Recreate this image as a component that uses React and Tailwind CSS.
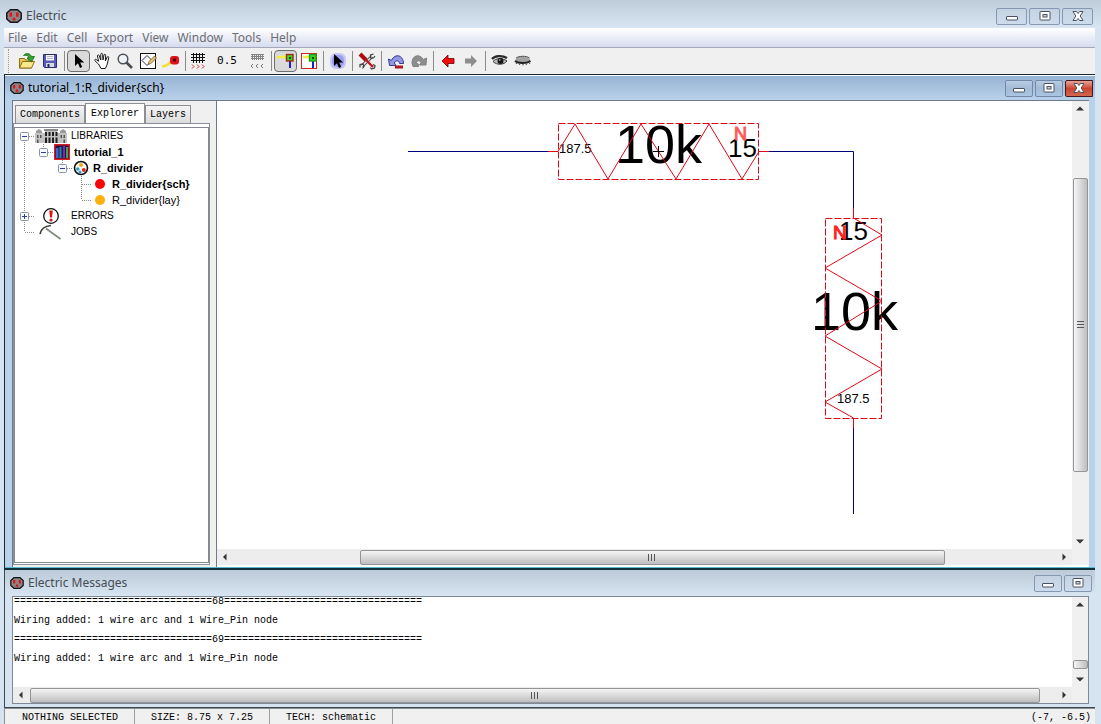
import React, { useState } from 'react';

const MENUS = ['File', 'Edit', 'Cell', 'Export', 'View', 'Window', 'Tools', 'Help'];

const TREE = [
  { cells: ['minus'], icon: 'libraries', label: 'LIBRARIES' },
  { cells: ['line', 'minusEnd'], icon: 'library', label: 'tutorial_1', bold: true },
  { cells: ['line', 'blank', 'minusEnd'], icon: 'cell', label: 'R_divider', bold: true },
  { cells: ['line', 'blank', 'blank', 'tee'], icon: 'red', label: 'R_divider{sch}', bold: true },
  { cells: ['line', 'blank', 'blank', 'end'], icon: 'orange', label: 'R_divider{lay}' },
  { cells: ['plus'], icon: 'errors', label: 'ERRORS' },
  { cells: ['end'], icon: 'jobs', label: 'JOBS' },
];

const RULE = '='.repeat(33);

const MESSAGES = [
  `${RULE}68${RULE}`,
  'Wiring added: 1 wire arc and 1 Wire_Pin node',
  `${RULE}69${RULE}`,
  'Wiring added: 1 wire arc and 1 Wire_Pin node',
  ' ',
];

const Logo = ({ small }) => (
  <svg width={small ? 14 : 16} height={small ? 12 : 14} viewBox="0 0 16 14" className="shrink-0">
    <path d="M4.500 .8h7L15.200 4v6l-3.700 3.200h-7L.8 10V4z" fill="#8b8585" stroke="#151515" strokeWidth="1.500" />
    <path d="M3.500 3.500H6v4.200H3.500zM10 3.500h2.500v4.200H10z" fill="#dc1420" />
    <path d="M6.500 11.500v-2L8 8.200l1.500 1.300v2z" fill="#dc1420" />
  </svg>
);

/* ---------- window buttons ---------- */

const MinGlyph = () => (
  <svg width="12" height="12" viewBox="0 0 12 12">
    <rect x=".5" y="6.500" width="11" height="3.500" rx=".5" fill="#fff" stroke="#4a5261" />
  </svg>
);

const MaxGlyph = () => (
  <svg width="12" height="12" viewBox="0 0 12 12">
    <rect x="1" y="1.500" width="10" height="8.500" rx=".5" fill="#fff" stroke="#4a5261" />
    <rect x="4" y="4.500" width="4" height="2.500" fill="#c9d7e6" stroke="#4a5261" />
  </svg>
);

const CloseGlyph = () => (
  <svg width="12" height="12" viewBox="0 0 12 12">
    <path d="M1 1.500h3.400L6 3.500l1.600-2H11L8.200 6l2.800 4.500H7.600L6 8.500l-1.600 2H1L3.800 6z" fill="#fff" stroke="#4a5261" />
  </svg>
);

const WinButtons = ({ kind }) => {
  const tone = kind === 'active'
    ? 'border-[#7188a8] bg-linear-to-b from-[#b9cde4] via-[#a3bbd6] to-[#a9c6e3]'
    : 'border-[#8597b2] bg-linear-to-b from-[#c5d2e2] to-[#cddcec]';
  const size = kind === 'main' ? 'w-[31px]' : 'w-7';
  return (
    <div className="ml-auto flex gap-[2px]">
      <button aria-label="Minimize" className={`flex h-[17px] items-center justify-center rounded-xs border ${size} ${tone}`}>
        <MinGlyph />
      </button>
      <button aria-label="Maximize" className={`flex h-[17px] items-center justify-center rounded-xs border ${size} ${tone}`}>
        <MaxGlyph />
      </button>
      {kind === 'main' && (
        <button aria-label="Close" className={`flex h-[17px] items-center justify-center rounded-xs border ${size} ${tone}`}>
          <CloseGlyph />
        </button>
      )}
      {kind === 'active' && (
        <button
          aria-label="Close"
          className="flex h-[17px] w-7 items-center justify-center rounded-l-xs border border-[#43191c] bg-linear-to-b from-[#e8a397] via-[#c9442f] to-[#d4674f]"
        >
          <CloseGlyph />
        </button>
      )}
    </div>
  );
};

/* ---------- toolbar ---------- */

const Icon = ({ children }) => (
  <svg width="18" height="18" viewBox="0 0 18 18" fill="none">{children}</svg>
);

const OpenIcon = () => (
  <Icon>
    <path d="M1.500 16v-9.500h5l1 1.500h6v8z" fill="#e8c84f" stroke="#8c6d1c" />
    <path d="M1.500 16l3-6.500h12l-3 6.500z" fill="#fbe88a" stroke="#8c6d1c" />
    <path d="M5.500 3.500C8 .5 12 1 13.500 4.500h3l-3 5.500-4.500-4 2-.4C10.500 3.500 8.500 3 5.500 3.500z" fill="#36a52d" stroke="#156415" strokeWidth=".8" />
  </Icon>
);

const SaveIcon = () => (
  <Icon>
    <path d="M2.500 2.500h13v13h-12l-1-1z" fill="#5a5bb6" stroke="#2b2c70" />
    <path d="M5 3h8v5.500H5z" fill="#f4f5fb" />
    <path d="M6 4.500h6M6 6.500h6" stroke="#b2b6cf" />
    <path d="M5 11h8v4H5z" fill="#d6d8e6" />
    <path d="M6.500 12h2v3h-2z" fill="#25265e" />
  </Icon>
);

const ArrowIcon = () => (
  <Icon><path d="M5 2v12l3-2.800 2 4.800 2.200-1-2-4.500h4z" fill="#000" /></Icon>
);

const HandIcon = () => (
  <Icon>
    <path
      d="M5.500 12L2 8.800c-1-1 .4-2 1.500-1.100L5.600 9.300 4.500 4c-.2-1.300 1.300-1.600 1.700-.4L7.800 8V2.300c0-1.300 1.700-1.300 1.800 0L10 8l1-5c.3-1.200 1.800-.9 1.600.4L12.400 9l1.800-4c.6-1 1.900-.4 1.500.7-.8 3.300-1.200 7.300-3.400 10.800H8z"
      fill="#fff"
      stroke="#1a1a1a"
    />
  </Icon>
);

const ZoomIcon = () => (
  <Icon>
    <circle cx="7" cy="7" r="4.800" fill="#eef2f6" stroke="#4c5058" strokeWidth="1.500" />
    <path d="M10.500 10.500L16 16" stroke="#4c4c50" strokeWidth="2.600" />
  </Icon>
);

const OutlineIcon = () => (
  <Icon>
    <rect x="1.500" y="1.500" width="15" height="15" fill="#fff" stroke="#111" />
    <path d="M3 8.500L8 3.500l5 5-5 5z" stroke="#27306f" />
    <path d="M9 12.500l1-3L15.500 4l2 2-5.500 5.500z" fill="#e4c479" stroke="#7b5c26" strokeWidth=".8" />
  </Icon>
);

const MeasureIcon = () => (
  <Icon>
    <path d="M0 14.500c4-.5 7-2 9-5" stroke="#f2e13a" strokeWidth="2.600" />
    <rect x="8" y="4" width="9" height="8.500" rx="3" fill="#e0131b" />
    <path d="M11 6.500h3v3h-3z" fill="#450b0d" />
  </Icon>
);

const GridIcon = () => (
  <Icon>
    <path d="M4.500 1v10M7.500 1v10M10.500 1v10M13.500 1v10M2 2.500h14M2 5.500h14M2 8.500h14" stroke="#111" />
    <path d="M3 12.500l2 2-2 2M8 12.500l2 2-2 2M13 12.500l2 2-2 2" stroke="#dd2222" />
  </Icon>
);

const GridSmallIcon = () => (
  <Icon>
    <path d="M4.500 2v6M6.500 2v6M8.500 2v6M10.500 2v6M12.500 2v6M14.500 2v6M3 2.500h13M3 4.500h13M3 6.500h13" stroke="#858585" />
    <path d="M5 12l-2 2 2 2M10 12l-2 2 2 2M15 12l-2 2 2 2" stroke="#777" />
  </Icon>
);

const NodeIcon = ({ boxed }) => (
  <Icon>
    {boxed && <rect x="1.500" y="1.500" width="15" height="15" fill="#fdfdfd" stroke="#d42323" />}
    <path d={boxed ? 'M3 5h8' : 'M0 5h10'} stroke="#f3ed3f" strokeWidth="2.500" />
    <path d="M13 9v7" stroke="#1b1bd4" strokeWidth="2" />
    <rect x="9.500" y="2.500" width="6.500" height="6.500" fill="#2edb22" stroke={boxed ? '#1ca01c' : '#a02815'} strokeWidth="1.400" />
    <path d="M12 5h2v2h-2z" fill="#123b12" />
  </Icon>
);

const SpecialSelectIcon = () => (
  <Icon>
    <rect x="1" y="1" width="16" height="16" rx="6" fill="#c5c6f6" />
    <rect x="3" y="3" width="12" height="12" rx="5" fill="#9a9df2" />
    <path d="M5 2v12l3-2.800 2 4.800 2.200-1-2-4.500h4z" fill="#000" />
  </Icon>
);

const PreferencesIcon = () => (
  <Icon>
    <path d="M4 14L14 4.500" stroke="#4a4a4a" strokeWidth="3.200" />
    <path d="M4 14L14 4.500" stroke="#f2f2f2" strokeWidth="1.400" />
    <path d="M15.500 2l-3 1v3h3l1.500-2M2 15.500v-3l3-.5 1 2.500-1.500 2" stroke="#3d3d3d" strokeWidth="1.200" />
    <path d="M2 2l6 6" stroke="#a80f15" strokeWidth="4" />
    <path d="M7.500 7.500L15 15" stroke="#bf1820" strokeWidth="2.400" />
    <path d="M12.500 15.500l1 1.500 3-1 .5-2.500-2-1" stroke="#3d3d3d" strokeWidth="1.200" />
  </Icon>
);

const UndoIcon = () => (
  <Icon>
    <path d="M1.500 7l1 6.500h6.500L7.300 11C8.500 8 12 8 12.500 11.500h4C16.500 3.500 8.500 .5 4.300 8.500z" fill="#9298e2" stroke="#343a94" />
    <path d="M8 15h8" stroke="#b31724" strokeWidth="3" />
  </Icon>
);

const RedoIcon = () => (
  <Icon>
    <path d="M16.500 6l-.5 7H9.500L11 10.500C9.500 8 7 8.500 6.500 10.500c1.500 1 2 1.500 2 4H3L2 11C2 3.500 9 1 13.500 7.500z" fill="#8d8d8d" stroke="#808080" />
  </Icon>
);

const BackIcon = () => (
  <Icon><path d="M3 9l6-6v3.500h6v5H9V15z" fill="#f40b0b" stroke="#5f0808" strokeWidth=".8" /></Icon>
);

const ForwardIcon = () => (
  <Icon><path d="M15 9L9 3v3.500H3v5h6V15z" fill="#8d8d8d" /></Icon>
);

const EyeIcon = () => (
  <Icon>
    <path d="M1 7c3-3.500 10-4 15-1" stroke="#2a2a2a" strokeWidth="2.200" />
    <path d="M2 9.500C5 6 11 5.500 16 9c-3 4-10 4.500-14 .5z" fill="#bdbdbd" stroke="#3c3c3c" />
    <circle cx="9.500" cy="9" r="3" fill="#161616" />
    <path d="M8 8h1.500" stroke="#eee" />
  </Icon>
);

const EyeClosedIcon = () => (
  <Icon>
    <path d="M1 8c2-4.500 13-4.500 15.500 0-2 4.500-13 4.500-15.500 0z" fill="#a2a2a2" />
    <path d="M1 9c3 2.500 11 3 15.500 0" stroke="#222" strokeWidth="2" />
    <path d="M3 10.500l-1 1.500M6 11.500L5.500 13M9 12v1.500M12 11.500l.5 1.500M15 10.500l1 1.500M2 6c3-2 10-2.500 13.500 0" stroke="#444" />
  </Icon>
);

const ToolButton = ({ label, pressed, onClick, children }) => (
  <button
    aria-label={label}
    aria-pressed={!!pressed}
    onClick={onClick}
    className={`flex h-[22px] w-[23px] shrink-0 items-center justify-center rounded ${
      pressed ? 'border border-[#6f6f6f] bg-[#dadada] inset-shadow-xs' : ''
    }`}
  >
    {children}
  </button>
);

const Separator = ({ tight }) => (
  <div className={`ml-[3px] h-5 w-px shrink-0 bg-[#8c8c8c] ${tight ? '' : 'mr-[2px]'}`} />
);

const Toolbar = () => {
  const [mode, setMode] = useState('select');

  return (
    <div className="flex h-[27px] items-center border-b border-[#1b2733] bg-[#f0f0f0]">
      <div className="mr-[6px] ml-1 h-6 w-px border-l border-dotted border-[#999]" />
      <ToolButton label="Open library"><OpenIcon /></ToolButton>
      <ToolButton label="Save library"><SaveIcon /></ToolButton>
      <Separator />
      <ToolButton label="Select" pressed={mode === 'select'} onClick={() => setMode('select')}><ArrowIcon /></ToolButton>
      <ToolButton label="Pan" pressed={mode === 'pan'} onClick={() => setMode('pan')}><HandIcon /></ToolButton>
      <ToolButton label="Zoom" pressed={mode === 'zoom'} onClick={() => setMode('zoom')}><ZoomIcon /></ToolButton>
      <ToolButton label="Outline edit" pressed={mode === 'outline'} onClick={() => setMode('outline')}><OutlineIcon /></ToolButton>
      <ToolButton label="Measure" pressed={mode === 'measure'} onClick={() => setMode('measure')}><MeasureIcon /></ToolButton>
      <Separator tight />
      <ToolButton label="Larger grid"><GridIcon /></ToolButton>
      <span className="w-9 text-center font-['DejaVu_Sans_Mono',monospace] text-[11px]">0.5</span>
      <ToolButton label="Smaller grid"><GridSmallIcon /></ToolButton>
      <Separator />
      <ToolButton label="Select objects" pressed><NodeIcon /></ToolButton>
      <ToolButton label="Select area"><NodeIcon boxed /></ToolButton>
      <Separator />
      <ToolButton label="Special select"><SpecialSelectIcon /></ToolButton>
      <Separator />
      <ToolButton label="Preferences"><PreferencesIcon /></ToolButton>
      <Separator />
      <ToolButton label="Undo"><UndoIcon /></ToolButton>
      <ToolButton label="Redo"><RedoIcon /></ToolButton>
      <Separator />
      <ToolButton label="Back"><BackIcon /></ToolButton>
      <ToolButton label="Forward"><ForwardIcon /></ToolButton>
      <Separator />
      <ToolButton label="Expand"><EyeIcon /></ToolButton>
      <ToolButton label="Unexpand"><EyeClosedIcon /></ToolButton>
    </div>
  );
};

/* ---------- explorer tree ---------- */

const TreeCell = ({ type }) => {
  const box = type === 'minus' || type === 'minusEnd' || type === 'plus';
  const up = type !== 'blank' && type !== 'minus';
  const down = ['minus', 'plus', 'line', 'tee'].includes(type);
  const across = type !== 'line' && type !== 'blank';
  return (
    <svg width="19" height="16" viewBox="0 0 19 16" fill="none" className="shrink-0">
      <g stroke="#8f8f8f" strokeDasharray="1 1">
        {up && <path d="M9.500 0v8" />}
        {down && <path d="M9.500 8v8" />}
        {across && <path d="M10 8.500h9" />}
      </g>
      {box && (
        <>
          <rect x="5.500" y="4.500" width="8" height="8" rx="1" fill="#f7f8fa" stroke="#8a94a6" />
          <path d="M7 8.500h5" stroke="#2f3e9a" />
          {type === 'plus' && <path d="M9.500 6v5" stroke="#2f3e9a" />}
        </>
      )}
    </svg>
  );
};

const TreeIcon = ({ name }) => {
  switch (name) {
    case 'libraries':
      return (
        <svg width="32" height="16" viewBox="0 0 32 16">
          <path d="M0 5h10V2h12v3h10v10H0z" fill="#c2c2c2" />
          <path d="M1 3l3-2 3 2v2H1zM25 3l3-2 3 2v2h-6z" fill="#9a9a9a" />
          <path d="M9 1h14v2H9z" fill="#8a8a8a" />
          <path d="M10 4h2v4h-2zM13.500 4h2v4h-2zM17 4h2v4h-2zM20.500 4h2v4h-2zM10 9.500h2V15h-2zM13.500 9.500h2V15h-2zM17 9.500h2V15h-2zM20.500 9.500h2V15h-2z" fill="#1f1f1f" />
          <path d="M2 7h1.500v3H2zM5 7h1.500v3H5zM25.500 7H27v3h-1.500zM28.500 7H30v3h-1.500zM2 11.500h1.500V15H2zM28.500 11.500H30V15h-1.500z" fill="#555" />
        </svg>
      );
    case 'library':
      return (
        <svg width="16" height="16" viewBox="0 0 16 16">
          <rect width="16" height="16" fill="#d81f1f" />
          <path d="M1.500 1.500h13v13h-13z" fill="#25114b" />
          <path d="M2 4h2.500v10H2z" fill="#3d66d8" />
          <path d="M5.500 3h2v11h-2z" fill="#1f8f9c" />
          <path d="M9 2h2v12H9z" fill="#7a2bb5" />
          <path d="M12 3h2v11h-2z" fill="#3aa84a" />
        </svg>
      );
    case 'cell':
      return (
        <svg width="16" height="16" viewBox="0 0 16 16">
          <circle cx="8" cy="8" r="6.500" fill="#fff" stroke="#111" strokeWidth="1.600" />
          <circle cx="8" cy="5" r="2" fill="#f0a61a" />
          <circle cx="4.800" cy="9" r="1.800" fill="#2b9fc0" />
          <circle cx="10.800" cy="10" r="2" fill="#e02a1e" />
          <circle cx="7" cy="12" r="1.500" fill="#2a9ac8" />
        </svg>
      );
    case 'errors':
      return (
        <svg width="32" height="16" viewBox="0 0 32 16">
          <circle cx="16" cy="8" r="7.300" fill="#fff" stroke="#111" strokeWidth="1.300" />
          <path d="M14.200 2.500h3.600L17 9.500h-2z" fill="#e01212" />
          <circle cx="16" cy="12" r="1.600" fill="#e01212" />
        </svg>
      );
    case 'jobs':
      return (
        <svg width="32" height="16" viewBox="0 0 32 16" fill="none">
          <path d="M5 10C6 5 10 2 16 1.500" stroke="#3a4038" strokeWidth="1.600" />
          <path d="M11 4.500L25.500 15" stroke="#7e8a7a" strokeWidth="1.600" />
        </svg>
      );
    default:
      return (
        <svg width="16" height="16" viewBox="0 0 16 16">
          <circle cx="8" cy="8" r="5" fill={name === 'red' ? '#fb0404' : '#fdb10d'} />
        </svg>
      );
  }
};

const Explorer = () => {
  const [tab, setTab] = useState('Explorer');

  return (
    <aside className="flex w-[203px] shrink-0 flex-col bg-[#f0f0f0] pt-[2px] pr-[6px]">
      <div role="tablist" className="flex h-5 items-end pl-[2px] font-['Liberation_Mono',monospace] text-[10px]">
        {['Components', 'Explorer', 'Layers'].map((name) => (
          <button
            key={name}
            role="tab"
            aria-selected={tab === name}
            onClick={() => setTab(name)}
            className={`border border-b-0 border-[#8c8e94] ${
              tab === name ? '-mb-px h-[21px] bg-white px-[5px] pb-px' : 'h-[18px] bg-linear-to-b from-[#f4f4f4] to-[#dcdcdc] px-1'
            }`}
          >
            {name}
          </button>
        ))}
      </div>
      <div className="mb-[2px] flex flex-1 border border-[#8a9099] bg-white pt-[3px] pb-px">
        <ul className="flex-1 border border-[#828790] font-['Liberation_Sans',Arial,sans-serif]">
          {TREE.map((node) => (
            <li key={node.label} className="flex h-4 items-center whitespace-nowrap">
              {node.cells.map((type, i) => <TreeCell key={i} type={type} />)}
              <span className="mr-1 ml-px shrink-0"><TreeIcon name={node.icon} /></span>
              <span className={node.cells.length > 1 ? `text-[11px] ${node.bold ? 'font-bold' : ''}` : 'text-[10px]'}>
                {node.label}
              </span>
            </li>
          ))}
        </ul>
      </div>
    </aside>
  );
};

/* ---------- scroll bars ---------- */

const ARROWS = {
  up: 'M4 9.500L8 5.500l4 4z',
  down: 'M4 6.500L8 10.500l4-4z',
  left: 'M9.500 4.500L6 8l3.500 3.500z',
  right: 'M6.500 4.500L10 8l-3.500 3.500z',
};

const ScrollArrow = ({ dir }) => (
  <button aria-label={`Scroll ${dir}`} className="flex size-4 shrink-0 items-center justify-center">
    <svg width="16" height="16" viewBox="0 0 16 16"><path d={ARROWS[dir]} fill="#333" /></svg>
  </button>
);

const Grip = ({ vertical }) => (
  <div className={`flex gap-px ${vertical ? 'flex-col' : ''}`}>
    {[0, 1, 2].map((i) => (
      <div key={i} className={`border-[#555] ${vertical ? 'h-[2px] w-[7px] border-t' : 'h-[7px] w-[2px] border-l'}`} />
    ))}
  </div>
);

const HScroll = ({ before, thumb, after }) => (
  <div className="flex h-4 min-w-0 flex-1 bg-[#ededed]">
    <ScrollArrow dir="left" />
    <div className={before} />
    <div className={`mt-px flex items-center justify-center rounded-xs border border-[#959595] bg-linear-to-b from-[#f5f5f5] via-[#dadada] to-[#bebec0] ${thumb}`}>
      <Grip />
    </div>
    <div className={after} />
    <ScrollArrow dir="right" />
  </div>
);

const VScroll = ({ before, thumb, after, grip }) => (
  <div className="flex w-4 shrink-0 flex-col bg-[#f0f0f0]">
    <ScrollArrow dir="up" />
    <div className={before} />
    <div className={`ml-px flex items-center justify-center rounded-xs border border-[#959595] bg-linear-to-r from-[#f5f5f5] via-[#dadadc] to-[#bebec2] ${thumb}`}>
      {grip && <Grip vertical />}
    </div>
    <div className={after} />
    <ScrollArrow dir="down" />
  </div>
);

/* ---------- schematic ---------- */

const Schematic = () => (
  <svg
    width="856"
    height="448"
    viewBox="217 101 856 448"
    fill="none"
    className="shrink-0 font-['Liberation_Sans',Arial,sans-serif]"
  >
    <g fill="#000">
      <text x="615" y="163" fontSize="54">10k</text>
      <text x="728" y="157" fontSize="26">15</text>
      <text x="559" y="153" fontSize="13">187.5</text>
      <text x="811" y="330" fontSize="54">10k</text>
      <text x="839" y="240" fontSize="26">15</text>
      <text x="837" y="403" fontSize="13">187.5</text>
    </g>
    <text x="734" y="140" fontSize="18" fill="#ff5a5a" stroke="#ff5a5a">N</text>
    <text x="833" y="239" fontSize="19" fill="#ff2020" stroke="#ff2020">N</text>

    <g stroke="#00007c">
      <path d="M408 151.500h140M769 151.500h84.500V208M853.500 428v86" />
    </g>
    <g stroke="#e00818">
      <path d="M548 151.500h10M759 151.500h10M853.500 208v10M853.500 418v10" />
      <path d="M558.500 123.500h200v56h-200zM825.500 218.500h56v200h-56z" strokeDasharray="7 2" />
      <path d="M558 151.500L575 124l33 55 33-55 35 55 33-55 33 55 17-27.500" />
      <path d="M853.500 218L882 235l-57 33 57 33-57 35 57 33-57 33 28.500 16" />
    </g>
    <path d="M653 151.500h11M658.500 146v11" stroke="#000" />
  </svg>
);

const App = () => {
  return (
    <div className="flex min-h-screen flex-col bg-[#d6e4f2] font-['Noto_Sans','Open_Sans',sans-serif] text-xs text-black">
      <header className="flex h-7 items-center bg-linear-to-b from-[#bfccd9] to-[#d8e5f2] pt-1 pr-2 pl-[6px]">
        <Logo />
        <h1 className="ml-1 text-[#454d55]">Electric</h1>
        <WinButtons kind="main" />
      </header>

      <div className="flex flex-1 flex-col pr-[6px] pl-1">
        <nav className="flex h-5 items-center gap-[9px] border-b border-[#a5a8b8] bg-linear-to-b from-white to-[#d6dcef] pl-1 text-[#6d6d72]">
          {MENUS.map((menu) => <button key={menu}>{menu}</button>)}
        </nav>

        <Toolbar />

        <section className="flex flex-1 flex-col border-b-2 border-l border-b-[#12303a] border-l-[#1b2733] bg-[#b9d1ea]">
          <div className="flex h-[25px] items-center border-t border-white bg-linear-to-b from-[#98b4d4] to-[#b9d1ea] pr-[2px] pl-[5px]">
            <Logo small />
            <h2 className="ml-1">tutorial_1:R_divider&#123;sch&#125;</h2>
            <WinButtons kind="active" />
          </div>
          <div className="mr-[6px] ml-[7px] flex flex-1 border-t border-l border-[#6d7a8b] bg-[#f0f0f0]">
            <Explorer />
            <div className="mr-px flex min-w-0 flex-1 flex-col border-l border-[#6d7a8b] bg-white">
              <div className="flex flex-1">
                <main className="flex min-w-0 flex-1 overflow-hidden bg-white">
                  <Schematic />
                </main>
                <VScroll before="flex-[61]" thumb="flex-[294]" after="flex-[61]" grip />
              </div>
              <div className="mb-[2px] flex">
                <HScroll before="flex-[127]" thumb="flex-[584]" after="flex-[111]" />
                <div className="w-4 bg-[#f0f0f0]" />
              </div>
            </div>
          </div>
          <div className="h-px bg-[#5cb8cc]" />
        </section>

        <section className="flex flex-col border-b border-l border-[#3c4854] bg-[#d6e4f2] pb-[3px]">
          <div className="flex h-[26px] items-center bg-linear-to-b from-[#bccad8] to-[#d8e5f2] pr-[3px] pl-[5px]">
            <Logo small />
            <h2 className="ml-1 text-[#454d55]">Electric Messages</h2>
            <WinButtons kind="idle" />
          </div>
          <div className="mr-[6px] ml-[7px] flex flex-col border border-[#7f8896] bg-white">
            <div className="flex h-[90px]">
              <div className="flex flex-1 flex-col justify-end overflow-hidden pl-px font-['Liberation_Mono',monospace] text-[10px] leading-[19px] whitespace-pre">
                {MESSAGES.map((line, i) => <p key={i}>{line}</p>)}
              </div>
              <VScroll before="flex-[49]" thumb="flex-[7]" after="flex-[2]" />
            </div>
            <div className="flex">
              <HScroll before="flex-[1]" thumb="flex-[1008]" after="flex-[16]" />
              <div className="w-4 bg-[#f0f0f0]" />
            </div>
          </div>
        </section>

        <footer className="flex h-4 border-t border-l border-[#8a8f94] bg-[#f0f0f0] pl-px font-['Liberation_Mono',monospace] text-[10px] leading-[17px] whitespace-pre">
          <span className="border-r border-[#a0a0a0] px-4">NOTHING SELECTED</span>
          <span className="border-r border-[#a0a0a0] px-4">SIZE: 8.75 x 7.25</span>
          <span className="border-r border-[#a0a0a0] px-4">TECH: schematic</span>
          <span className="ml-auto pr-1">(-7, -6.5)</span>
        </footer>
      </div>
    </div>
  );
};

export default App;
